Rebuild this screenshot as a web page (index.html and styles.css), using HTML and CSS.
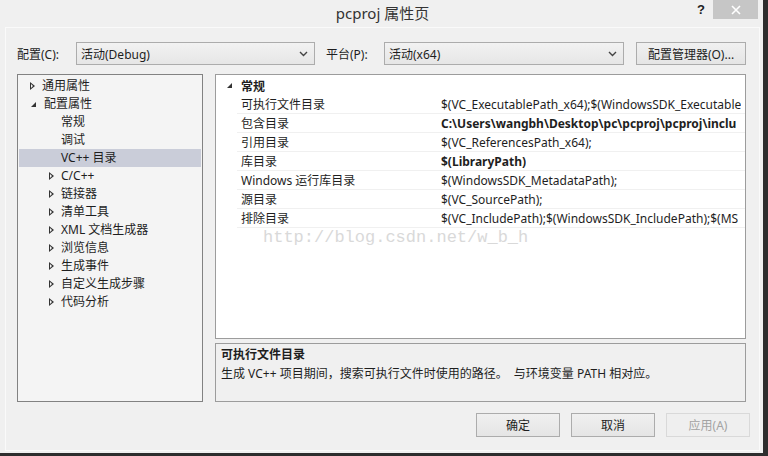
FILE: index.html
```html
<!DOCTYPE html>
<html lang="zh-CN">
<head>
<meta charset="utf-8">
<title>pcproj 属性页</title>
<link rel="stylesheet" href="styles.css">
</head>
<body>
<div class="window">
  <div class="titlebar">
    <div class="title-spacer"></div>
    <div class="title">pcproj 属性页</div>
    <div class="title-controls">
      <span class="help">?</span>
      <span class="close">
        <svg width="10" height="10" viewBox="0 0 10 10"><path d="M1 1 L9 9 M9 1 L1 9" stroke="#fff" stroke-width="1.6"/></svg>
      </span>
    </div>
  </div>
  <div class="client">
    <div class="toolbar">
      <span class="lbl lbl-config">配置(C):</span>
      <div class="combo combo-config"><span>活动(Debug)</span><svg class="chev" width="9" height="6" viewBox="0 0 9 6"><path d="M1 1 L4.5 4.5 L8 1" fill="none" stroke="#444" stroke-width="1.4"/></svg></div>
      <span class="lbl lbl-platform">平台(P):</span>
      <div class="combo combo-platform"><span>活动(x64)</span><svg class="chev" width="9" height="6" viewBox="0 0 9 6"><path d="M1 1 L4.5 4.5 L8 1" fill="none" stroke="#444" stroke-width="1.4"/></svg></div>
      <div class="btn btn-manager">配置管理器(O)...</div>
    </div>
    <div class="main">
      <div class="tree">
        <div class="node l1"><span class="tri-open"></span>通用属性</div>
        <div class="node l1"><span class="tri-exp"></span>配置属性</div>
        <div class="node l2 leaf">常规</div>
        <div class="node l2 leaf">调试</div>
        <div class="node l2 leaf selected">VC++ 目录</div>
        <div class="node l2"><span class="tri-open"></span>C/C++</div>
        <div class="node l2"><span class="tri-open"></span>链接器</div>
        <div class="node l2"><span class="tri-open"></span>清单工具</div>
        <div class="node l2"><span class="tri-open"></span>XML 文档生成器</div>
        <div class="node l2"><span class="tri-open"></span>浏览信息</div>
        <div class="node l2"><span class="tri-open"></span>生成事件</div>
        <div class="node l2"><span class="tri-open"></span>自定义生成步骤</div>
        <div class="node l2"><span class="tri-open"></span>代码分析</div>
      </div>
      <div class="right">
        <div class="grid">
          <div class="cat"><span class="tri-exp cat-tri"></span><b>常规</b></div>
          <div class="row"><span class="key">可执行文件目录</span><span class="val">$(VC_ExecutablePath_x64);$(WindowsSDK_Executable</span></div>
          <div class="row"><span class="key">包含目录</span><span class="val bold">C:\Users\wangbh\Desktop\pc\pcproj\pcproj\inclu</span></div>
          <div class="row"><span class="key">引用目录</span><span class="val">$(VC_ReferencesPath_x64);</span></div>
          <div class="row"><span class="key">库目录</span><span class="val bold">$(LibraryPath)</span></div>
          <div class="row"><span class="key">Windows 运行库目录</span><span class="val">$(WindowsSDK_MetadataPath);</span></div>
          <div class="row"><span class="key">源目录</span><span class="val">$(VC_SourcePath);</span></div>
          <div class="row"><span class="key">排除目录</span><span class="val">$(VC_IncludePath);$(WindowsSDK_IncludePath);$(MS</span></div>
          <div class="watermark">http://blog.csdn.net/w_b_h</div>
        </div>
        <div class="desc">
          <div class="desc-title">可执行文件目录</div>
          <div class="desc-text">生成 VC++ 项目期间，搜索可执行文件时使用的路径。&nbsp;&nbsp;与环境变量 PATH 相对应。</div>
        </div>
      </div>
    </div>
    <div class="buttons">
      <div class="btn btn-dlg">确定</div>
      <div class="btn btn-dlg">取消</div>
      <div class="btn btn-dlg disabled">应用(A)</div>
    </div>
  </div>
</div>
</body>
</html>
```
FILE: styles.css
```css
* { box-sizing: border-box; }
html, body { margin: 0; padding: 0; }
body {
  width: 768px;
  height: 456px;
  overflow: hidden;
  background: #f0f0f0;
  font-family: "Noto Sans", "Noto Sans CJK SC", sans-serif;
  font-size: 12px;
  color: #1e1e1e;
}
.window {
  width: 768px;
  height: 456px;
  display: flex;
  flex-direction: column;
  background: #f0f0f0;
  border-right: 5px solid #2e2e2e;
  border-bottom: 3px solid #2e2e2e;
}
.titlebar {
  height: 27px;
  display: grid;
  grid-template-columns: 1fr auto 1fr;
  align-items: start;
}
.title {
  font-family: "Noto Sans", "Noto Sans CJK SC", sans-serif;
  font-size: 15px;
  color: #333;
  line-height: 27px;
  padding-left: 2px;
}
.title-controls {
  justify-self: end;
  display: flex;
  align-items: flex-start;
  padding-right: 5px;
}
.help {
  font-family: "Liberation Sans", sans-serif;
  font-weight: bold;
  font-size: 13px;
  color: #222;
  line-height: 20px;
  margin-right: 8px;
}
.close {
  width: 45px;
  height: 19px;
  background: #c6c6c6;
  display: flex;
  align-items: center;
  justify-content: center;
}
.client {
  flex: 1;
  margin-left: 5px;
  margin-right: 3px;
  margin-bottom: 2px;
  border: 1px solid #fafafa;
  padding: 14px 13px 0 11px;
  display: flex;
  flex-direction: column;
}
.toolbar {
  height: 23px;
  display: flex;
  align-items: center;
}
.lbl { white-space: nowrap; }
.lbl-config { width: 59px; }
.lbl-platform { width: 58px; margin-left: 11px; }
.combo {
  height: 23px;
  border: 1px solid #acacac;
  background: linear-gradient(#f2f2f2, #e6e6e6);
  display: flex;
  align-items: center;
  justify-content: space-between;
  padding: 0 6px 0 4px;
}
.combo-config { width: 239px; }
.combo-platform { width: 240px; }
.chev { margin-top: 1px; }
.btn {
  height: 23px;
  border: 1px solid #acacac;
  background: linear-gradient(#f0f0f0, #e5e5e5);
  display: flex;
  align-items: center;
  justify-content: center;
  white-space: nowrap;
}
.btn-manager { width: 110px; margin-left: 12px; }
.main {
  margin-top: 9px;
  height: 328px;
  display: flex;
  gap: 12px;
}
.tree {
  width: 186px;
  border: 1px solid #828282;
  background: #f4f4f4;
  padding: 2px 1px 0 1px;
}
.node {
  height: 18px;
  line-height: 18px;
  display: flex;
  align-items: center;
  white-space: nowrap;
}
.node.l1 { padding-left: 11px; }
.node.l2 { padding-left: 30px; }
.node.leaf { padding-left: 42px; }
.node.selected { background: #cacdd9; }
.tri-open {
  width: 0; height: 0;
  border-top: 4px solid transparent;
  border-bottom: 4px solid transparent;
  border-left: 5px solid #333;
  position: relative;
  margin-right: 7px;
}
.tri-open::after {
  content: "";
  position: absolute;
  left: -4px;
  top: -2px;
  border-top: 2px solid transparent;
  border-bottom: 2px solid transparent;
  border-left: 2px solid #f4f4f4;
}
.tri-exp {
  width: 0; height: 0;
  border-left: 5px solid transparent;
  border-bottom: 5px solid #333;
  margin-right: 8px;
  margin-left: 1px;
}
.right {
  width: 531px;
  display: flex;
  flex-direction: column;
  gap: 4px;
}
.grid {
  position: relative;
  height: 265px;
  border: 1px solid #9c9c9c;
  background: #fff;
  overflow: hidden;
}
.cat {
  height: 19px;
  margin-top: 1px;
  display: flex;
  align-items: center;
  padding-left: 10px;
}
.cat-tri { margin-right: 9px; }
.cat b { font-weight: bold; }
.row {
  height: 19px;
  margin-left: 21px;
  display: flex;
  align-items: center;
  border-bottom: 1px solid #f0f0f0;
  white-space: nowrap;
}
.key { width: 204px; flex: none; padding-left: 4px; }
.val { overflow: hidden; }
.val.bold { font-weight: bold; }
.watermark {
  position: absolute;
  left: 47px;
  top: 153px;
  font-family: "Liberation Mono", monospace;
  font-size: 17px;
  color: #d9d9d9;
  white-space: nowrap;
}
.desc {
  flex: 1;
  border: 1px solid #9c9c9c;
  background: #f0f0f0;
  padding: 2px 5px;
}
.desc-title { font-weight: bold; line-height: 17px; }
.desc-text { line-height: 19px; margin-top: 1px; }
.buttons {
  margin-top: 11px;
  margin-right: -4px;
  display: flex;
  justify-content: flex-end;
  gap: 11px;
}
.btn-dlg { width: 84px; height: 24px; }
.btn-dlg.disabled {
  border-color: #d9d9d9;
  background: #efefef;
  color: #a3a3a3;
}
```
